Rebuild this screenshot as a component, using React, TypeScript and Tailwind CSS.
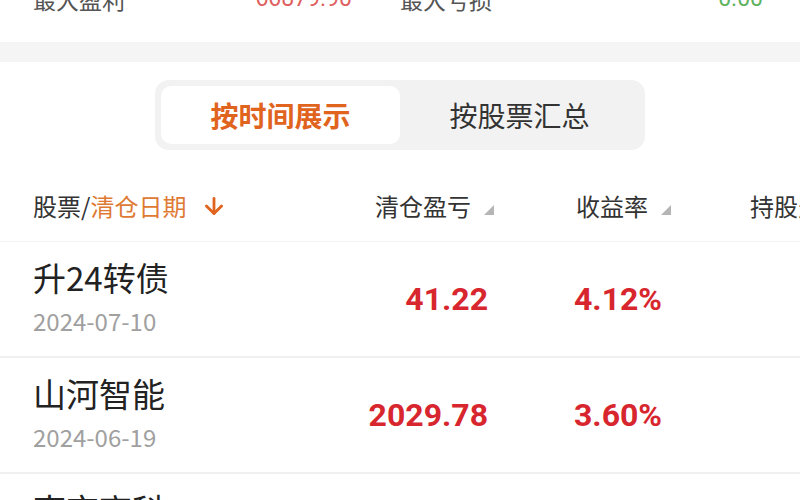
import { ArrowDown } from 'lucide-react';

const rows = [
  { name: '升24转债', date: '2024-07-10', profit: '41.22', rate: '4.12%' },
  { name: '山河智能', date: '2024-06-19', profit: '2029.78', rate: '3.60%' },
  { name: '南京高科', date: '2024-06-12', profit: '1186.50', rate: '2.85%' },
];

function Corner() {
  return (
    <svg width="10" height="10" viewBox="0 0 10 10" className="ml-[13px] mt-[8px] shrink-0">
      <polygon points="10,0 10,10 0,10" fill="#b5b5b5" />
    </svg>
  );
}

export default function App() {
  return (
    <div
      className="w-[800px] h-[500px] overflow-hidden bg-white"
      style={{ fontFamily: '"Noto Sans CJK SC", "Noto Sans", sans-serif' }}
    >
      {/* Summary (cut off at the top) */}
      <div className="h-[42px] overflow-hidden">
        <div className="flex items-center mt-[-15px] h-[28px] px-[33px] text-[23px] leading-[28px]">
          <div className="w-[319px] shrink-0 flex justify-between">
            <span className="text-[#555]">最大盈利</span>
            <span className="text-[#e06060]" style={{ fontFamily: 'Roboto, sans-serif' }}>66879.90</span>
          </div>
          <div className="ml-[48px] w-[363px] shrink-0 flex justify-between">
            <span className="text-[#555]">最大亏损</span>
            <span className="text-[#5fb35f]" style={{ fontFamily: 'Roboto, sans-serif' }}>0.00</span>
          </div>
        </div>
      </div>
      <div className="h-[20px] bg-[#f5f5f5]" />

      {/* Tabs */}
      <div className="pt-[18px] flex justify-center">
        <div className="w-[490px] h-[70px] rounded-[14px] bg-[#f2f2f2] p-[6px] flex">
          <div className="w-[239px] rounded-[10px] bg-white flex items-center justify-center text-[28px] font-bold text-[#e0641e]">
            按时间展示
          </div>
          <div className="flex-1 flex items-center justify-center text-[28px] text-[#333]">按股票汇总</div>
        </div>
      </div>

      {/* Header */}
      <div className="mt-[20px] h-[72px] flex items-center pl-[33px] text-[24px] text-[#333] border-b border-[#f3f3f3] whitespace-nowrap">
        <div className="w-[320px] shrink-0 flex items-center">
          <span>股票/</span>
          <span className="text-[#de7a34]">清仓日期</span>
          <ArrowDown size={26} strokeWidth={2.6} className="ml-[15px] text-[#e0641e]" />
        </div>
        <div className="w-[141px] shrink-0 flex items-center justify-end">
          <span>清仓盈亏</span>
          <Corner />
        </div>
        <div className="w-[256px] shrink-0 pl-[82px] flex items-center">
          <span>收益率</span>
          <Corner />
        </div>
        <div className="shrink-0">持股天数</div>
      </div>

      {/* Rows */}
      {rows.map((r) => (
        <div key={r.name} className="h-[116px] flex items-center px-[33px] border-b-2 border-[#f0f0f0]">
          <div className="w-[320px] shrink-0 h-full pt-[15px]">
            <div className="text-[33px] leading-[40px] text-[#222]">{r.name}</div>
            <div className="mt-[10px] text-[24px] leading-[28px] text-[#a0a0a0]">{r.date}</div>
          </div>
          <div
            className="w-[135px] shrink-0 text-right text-[32px] font-bold text-[#d8262e]"
            style={{ fontFamily: 'Roboto, sans-serif' }}
          >
            {r.profit}
          </div>
          <div
            className="pl-[86px] shrink-0 text-[32px] font-bold text-[#d8262e]"
            style={{ fontFamily: 'Roboto, sans-serif' }}
          >
            {r.rate}
          </div>
        </div>
      ))}
    </div>
  );
}
